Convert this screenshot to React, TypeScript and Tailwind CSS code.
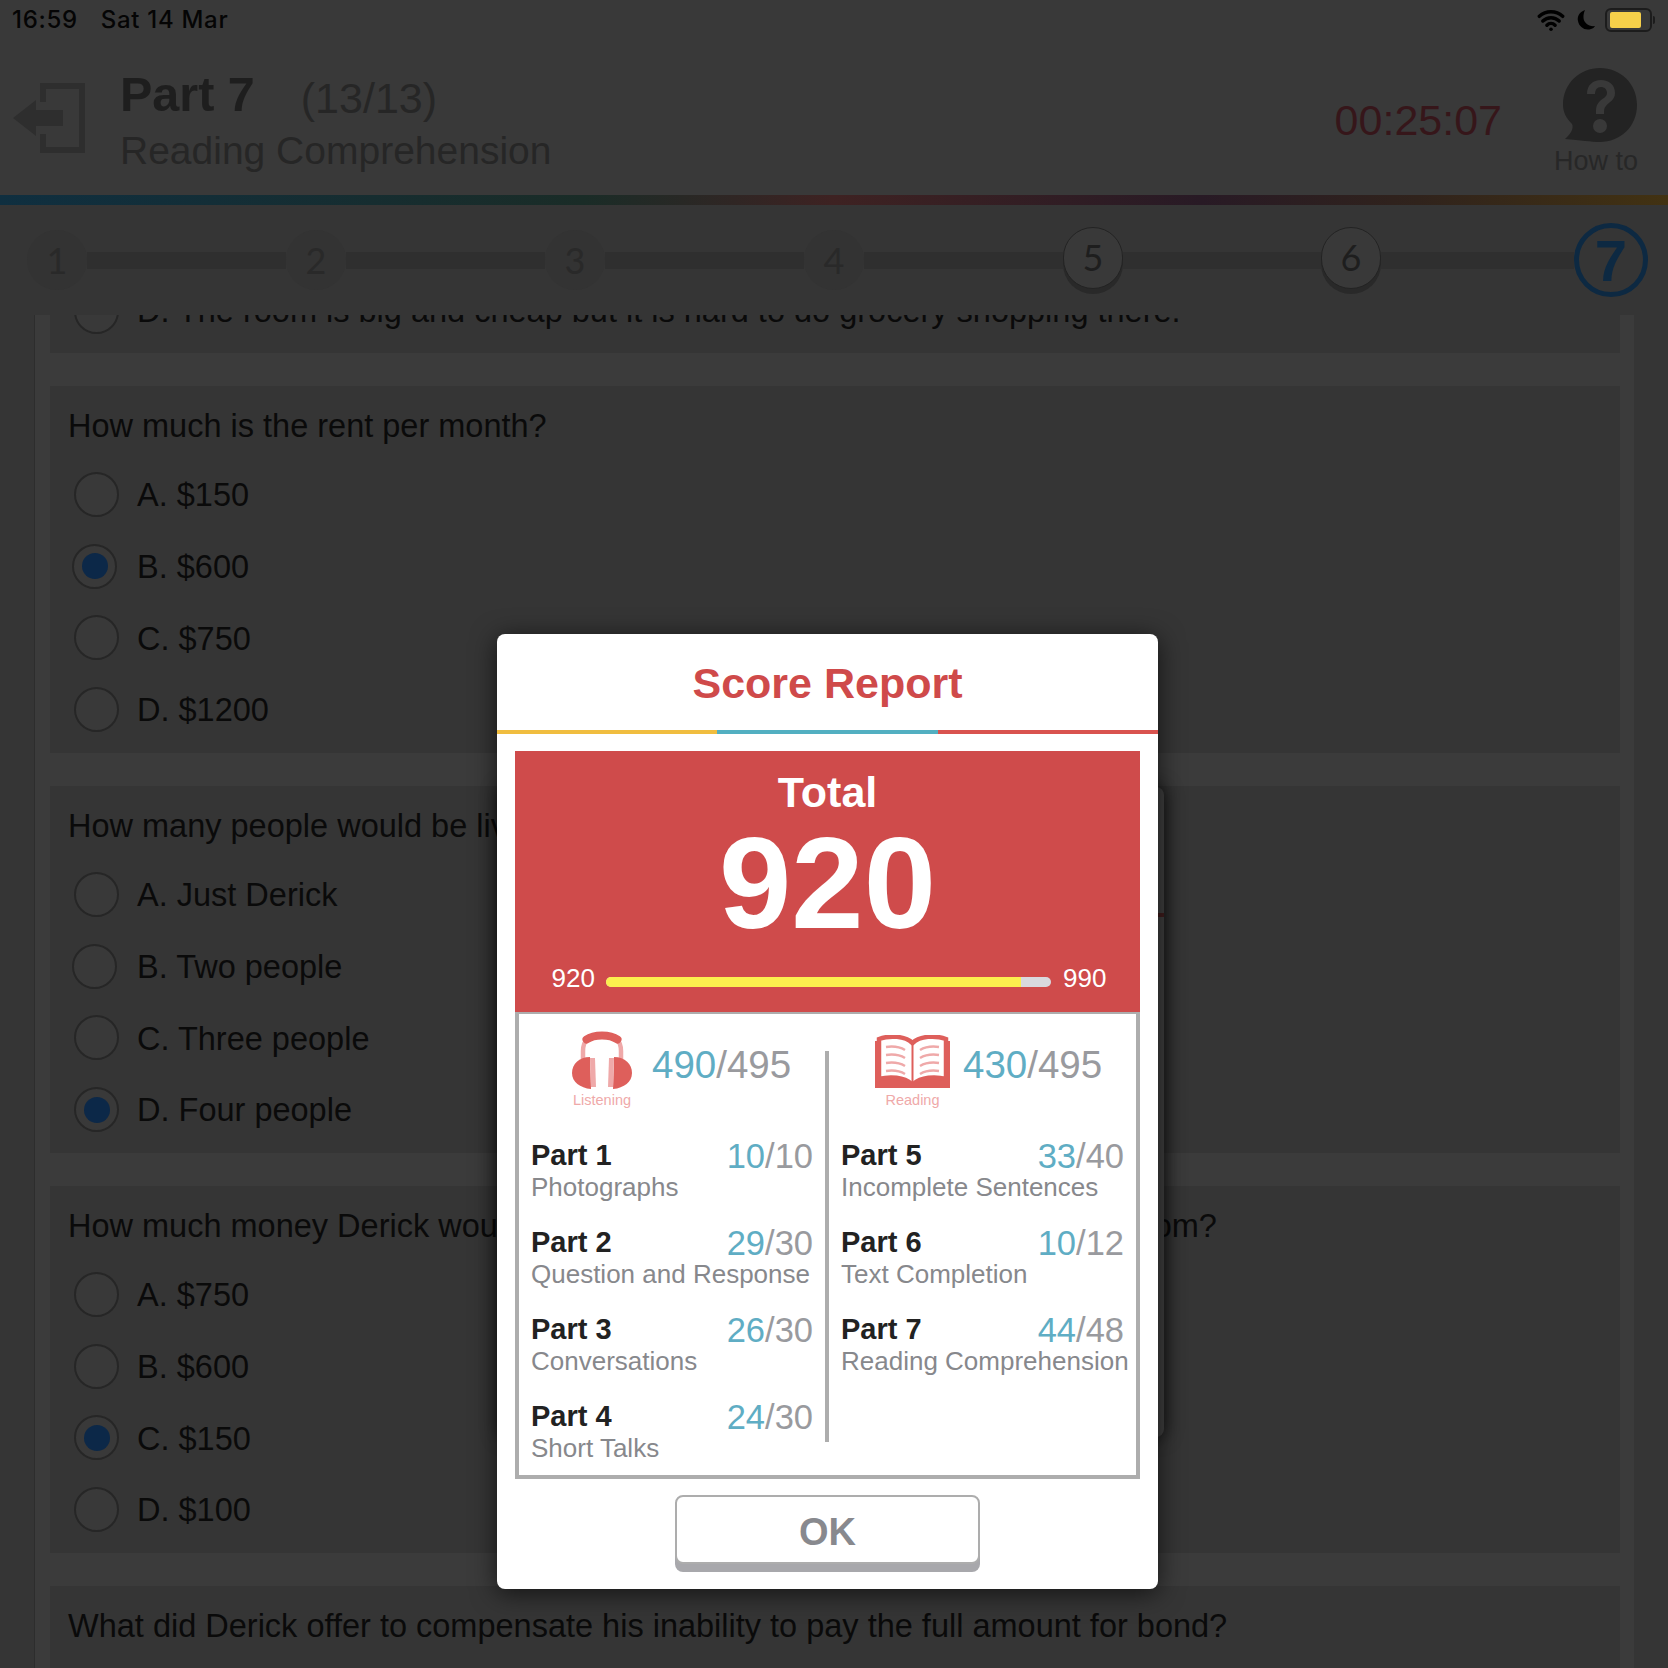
import { Wifi } from "lucide-react";

type Option = { label: string; selected?: boolean; shift?: boolean };

const questions: { title: string; options: Option[] }[] = [
  {
    title: "How much is the rent per month?",
    options: [
      { label: "A. $150" },
      { label: "B. $600", selected: true, shift: true },
      { label: "C. $750" },
      { label: "D. $1200" },
    ],
  },
  {
    title: "How many people would be living in the room?",
    options: [
      { label: "A. Just Derick" },
      { label: "B. Two people", shift: true },
      { label: "C. Three people" },
      { label: "D. Four people", selected: true },
    ],
  },
  {
    title: "How much money Derick would need to pay in advance in order to rent a room?",
    options: [
      { label: "A. $750" },
      { label: "B. $600" },
      { label: "C. $150", selected: true },
      { label: "D. $100" },
    ],
  },
];

const listening = [
  { part: "Part 1", name: "Photographs", score: "10", max: "10" },
  { part: "Part 2", name: "Question and Response", score: "29", max: "30" },
  { part: "Part 3", name: "Conversations", score: "26", max: "30" },
  { part: "Part 4", name: "Short Talks", score: "24", max: "30" },
];

const reading = [
  { part: "Part 5", name: "Incomplete Sentences", score: "33", max: "40" },
  { part: "Part 6", name: "Text Completion", score: "10", max: "12" },
  { part: "Part 7", name: "Reading Comprehension", score: "44", max: "48" },
];

function Radio({ selected, shift }: { selected?: boolean; shift?: boolean }) {
  return (
    <span
      className={`flex h-[45px] w-[45px] shrink-0 items-center justify-center rounded-full border-2 border-[#262626] bg-[#393939] ${
        shift ? "mr-[20px] ml-[-2px]" : "mr-[18px]"
      }`}
    >
      {selected && <span className="h-[26px] w-[26px] rounded-full bg-[#0c2848]" />}
    </span>
  );
}

function Question({ title, options }: { title: string; options: Option[] }) {
  return (
    <div className="h-[367px] bg-[#353535] pl-[18px]">
      <p className="pt-[21px] text-[32.5px] leading-[38px] whitespace-nowrap text-[#0a0a0a]">{title}</p>
      <div className="mt-[14px] flex flex-col pl-[6px]">
        {options.map((o) => (
          <div key={o.label} className="flex h-[71.6px] items-center text-[32.5px] text-[#0a0a0a]">
            <Radio selected={o.selected} shift={o.shift} />
            <span className="mt-[2px]">{o.label}</span>
          </div>
        ))}
      </div>
    </div>
  );
}

function Step({ n, done }: { n: number; done?: boolean }) {
  if (done) {
    return (
      <div className="mb-[4px] flex h-[62px] w-[60px] shrink-0 items-center justify-center rounded-full border border-[#232323] bg-[#393939] pb-[2px] font-['Lato',sans-serif] text-[36px] text-[#1e1e1e] shadow-[0_5px_0_#292929]">
        {n}
      </div>
    );
  }
  return (
    <div className="flex h-[60px] w-[60px] shrink-0 items-center justify-center rounded-full bg-[#333333] font-['Lato',sans-serif] text-[36px] text-[#292929]">
      {n}
    </div>
  );
}

function Track({ width }: { width: string }) {
  return <div className={`h-[17px] bg-[#2f2f2f] ${width}`} />;
}

function Headphones() {
  return (
    <svg width="60" height="58" viewBox="0 0 60 58">
      <path d="M11 28 V20 C11 14 13 10 16 7 M49 28 V20 C49 14 47 10 44 7" fill="none" stroke="#efa9a9" strokeWidth="4.5" />
      <path d="M14.500 8.500 C22 3 38 3 45.500 8.500" fill="none" stroke="#de5f5b" strokeWidth="8" strokeLinecap="round" />
      <path d="M18 26 C7 26 0 33 0 42 C0 51 8 57 19 58 Z" fill="#de5f5b" />
      <path d="M42 26 C53 26 60 33 60 42 C60 51 52 57 41 58 Z" fill="#de5f5b" />
      <path d="M20.500 27 L21.500 56" stroke="#efa9a9" strokeWidth="5" />
      <path d="M39.500 27 L38.500 56" stroke="#efa9a9" strokeWidth="5" />
    </svg>
  );
}

function Book() {
  return (
    <svg width="75" height="54" viewBox="0 0 75 54" className="mt-[4px]">
      <path d="M0 6 H5 V44 H70 V6 H75 V53 H0 Z" fill="#de5f5b" />
      <path d="M4 4 C15 0 30 1 37.500 8 C45 1 60 0 71 4 V44 C60 41 46 42 38.500 49 H36.500 C29 42 15 41 4 44 Z" fill="#fff" stroke="#de5f5b" strokeWidth="4.500" />
      <path d="M37.500 8 V49" stroke="#de5f5b" strokeWidth="2" />
      <path d="M11 12 C18 11 25 12 30 15 M11 20 C18 19 25 20 30 23 M11 28 C18 27 25 28 30 31 M11 36 C18 35 25 36 30 39" fill="none" stroke="#efa9a9" strokeWidth="2.500" />
      <path d="M64 12 C57 11 50 12 45 15 M64 20 C57 19 50 20 45 23 M64 28 C57 27 50 28 45 31 M64 36 C57 35 50 36 45 39" fill="none" stroke="#efa9a9" strokeWidth="2.500" />
    </svg>
  );
}

function PartRow({ part, name, score, max }: { part: string; name: string; score: string; max: string }) {
  return (
    <div className="mb-[23px] whitespace-nowrap">
      <div className="flex justify-between">
        <span className="text-[29px] leading-[34px] font-bold text-[#222]">{part}</span>
        <span className="mt-[2px] text-[34.5px] leading-[32px] text-[#999a9e]">
          <span className="text-[#5fadc4]">{score}</span>/{max}
        </span>
      </div>
      <div className="text-[26px] leading-[30px] text-[#87888c]">{name}</div>
    </div>
  );
}

function SectionHead({ label, score, icon, left, gap }: { label: string; score: string; icon: React.ReactNode; left: string; gap: string }) {
  return (
    <div className={`flex h-[124px] items-start pt-[17px] ${left} ${gap}`}>
      <div className="flex flex-col items-center">
        {icon}
        <span className="mt-[1px] text-[14.5px] leading-[20px] text-[#efa9a9]">{label}</span>
      </div>
      <span className="mt-[14px] text-[38.5px] leading-[40px] text-[#999a9e]">
        <span className="text-[#5fadc4]">{score}</span>/495
      </span>
    </div>
  );
}

export default function App() {
  return (
    <div className="relative h-[1668px] w-[1668px] overflow-hidden bg-[#353535] font-['Liberation_Sans',Arial,sans-serif]">
      {/* Header */}
      <div className="h-[195px] bg-[#393939]">
        <div className="flex h-[40px] items-center justify-between pr-[13px] pl-[12px] text-[24px] text-[#050505]">
          <div className="flex gap-[23px] font-['Inter',sans-serif] font-medium tracking-[0.7px]">
            <span>16:59</span>
            <span>Sat 14 Mar</span>
          </div>
          <div className="flex items-center">
            <Wifi size={28} strokeWidth={3} className="mr-[2px] text-black" />
            <svg width="20" height="22" viewBox="0 0 20 22" className="mr-[9px] ml-[9px]">
              <path d="M9 1 C3 3 1 8 2 12 C3 18 9 22 15 20 C17 19.500 18 18.500 19 17 C13 18 8 14 7.500 9 C7.300 6 8 3 9 1 Z" fill="#000" />
            </svg>
            <div className="flex h-[24px] w-[47px] items-center rounded-[6px] border-2 border-[#1c1c1c] pl-[3px]">
              <div className="h-[16px] w-[31px] rounded-[2px] bg-[#f6d04a]" />
            </div>
            <div className="ml-[1px] h-[8px] w-[2px] rounded-r bg-[#1c1c1c]" />
          </div>
        </div>

        <div className="flex">
          <svg width="80" height="76" viewBox="0 0 80 76" className="mt-[40px] ml-[12px]">
            <path d="M31 22 V6 H70 V70 H31 V54" fill="none" stroke="#2e2e2e" strokeWidth="6" />
            <path d="M1 38 L24 20 V30 H51 V46 H24 V56 Z" fill="#2e2e2e" />
          </svg>
          <div className="ml-[28px]">
            <div className="mt-[26px] flex items-baseline">
              <span className="text-[48.5px] leading-[56px] font-bold text-[#1e1e1e]">Part 7</span>
              <span className="ml-[46px] translate-y-[2px] text-[43px] leading-[56px] text-[#262626]">(13/13)</span>
            </div>
            <div className="mt-[5px] text-[39px] leading-[44px] text-[#262626]">Reading Comprehension</div>
          </div>
          <div className="ml-auto flex">
            <span className="mt-[15px] mr-[52px] text-[43px] leading-[130px] text-[#36161a]">00:25:07</span>
            <div className="mr-[30px] flex w-[84px] flex-col items-center pt-[28px]">
              <svg width="74" height="74" viewBox="0 0 74 74" className="ml-[7px]">
                <path d="M37 0 C57 0 74 15 74 37 C74 59 57 74 37 74 C28 74 18 72 2 71 C8 66 11 60 9 56 C3 50 0 44 0 37 C0 15 17 0 37 0 Z" fill="#232323" />
                <path d="M24 26 C24 17 30 12 38 12 C46 12 52 17 52 25 C52 32 46 34 43 38 C41 40 41 42 41 46 H33 C33 40 33 37 37 33 C40 30 44 29 44 25 C44 21 41 19 38 19 C34 19 32 22 32 26 Z" fill="#393939" />
                <circle cx="37" cy="58" r="7" fill="#393939" />
              </svg>
              <span className="mt-[1px] text-[27px] leading-[36px] whitespace-nowrap text-[#272727]">How to</span>
            </div>
          </div>
        </div>
      </div>

      {/* Colour bar */}
      <div className="h-[10px] bg-[linear-gradient(to_right,#0f2f40_0%,#1a2c27_35%,#3e2222_50%,#281a25_72%,#30231c_85%,#423212_100%)]" />

      {/* Stepper */}
      <div className="flex h-[110px] items-center pl-[27px]">
        <Step n={1} />
        <Track width="w-[199px]" />
        <Step n={2} />
        <Track width="w-[199px]" />
        <Step n={3} />
        <Track width="w-[199px]" />
        <Step n={4} />
        <Track width="w-[199px]" />
        <Step n={5} done />
        <Track width="w-[198px]" />
        <Step n={6} done />
        <Track width="w-[193px]" />
        <div className="flex h-[74px] w-[74px] shrink-0 items-center justify-center rounded-full border-[5px] border-[#0d2942] text-[58px] font-bold text-[#0d2942]">
          7
        </div>
      </div>

      {/* Question list */}
      <div className="ml-[34px] h-[1353px] w-[1600px] overflow-hidden border-l border-[#2d2d2d] bg-[#3b3b3b] pr-[14px] pl-[15px]">
        <div className="flex flex-col gap-[33px]">
          <div className="flex h-[38px] items-start overflow-hidden bg-[#353535] pl-[24px]">
            <div className="mt-[-30px] flex h-[52px] items-center text-[32.5px] whitespace-nowrap text-[#0a0a0a]">
              <Radio />
              D. The room is big and cheap but it is hard to do grocery shopping there.
            </div>
          </div>
          {questions.map((q) => (
            <Question key={q.title} title={q.title} options={q.options} />
          ))}
          <div className="h-[200px] bg-[#353535] pl-[18px]">
            <p className="pt-[21px] text-[32.5px] leading-[38px] whitespace-nowrap text-[#0a0a0a]">
              What did Derick offer to compensate his inability to pay the full amount for bond?
            </p>
          </div>
        </div>
      </div>

      {/* Dialog sitting behind the score report */}
      <div className="absolute top-[787px] left-[500px] h-[650px] w-[664px] rounded-[8px] bg-[#3f3f3f] pt-[126px] shadow-[0_0_18px_rgba(0,0,0,0.75)]">
        <div className="h-[4px] bg-[#3f1c1c]" />
      </div>

      {/* Score report */}
      <div className="absolute top-[634px] left-[497px] flex w-[661px] flex-col rounded-[8px] bg-white px-[18px] pb-[17px] shadow-[0_4px_26px_rgba(0,0,0,0.65)]">
        <div className="mx-[-18px] flex h-[96px] items-center justify-center pt-[2px] text-[43px] font-bold text-[#cf4a4a]">Score Report</div>
        <div className="mx-[-18px] flex h-[4px]">
          <div className="flex-1 bg-[#f0bd3f]" />
          <div className="flex-1 bg-[#52afc1]" />
          <div className="flex-1 bg-[#d9534f]" />
        </div>

        <div className="mt-[17px] flex h-[261px] flex-col items-center bg-[#cf4b4b] pt-[17px] text-white">
          <div className="text-[43px] leading-[48px] font-bold">Total</div>
          <div className="mt-[2px] text-[130px] leading-[130px] font-bold">920</div>
          <div className="mt-[15px] flex items-center pl-[3px] text-[26px] leading-[30px]">
            <span>920</span>
            <div className="mt-[8px] mr-[12px] ml-[11px] h-[10px] w-[445px] overflow-hidden rounded-full bg-[#d9d9de]">
              <div className="h-full w-[93.3%] bg-[#fcef4e]" />
            </div>
            <span>990</span>
          </div>
        </div>

        <div className="flex h-[467px] border-x-4 border-t-2 border-b-4 border-[#adadad]">
          <div className="w-[306px] shrink-0 px-[12px]">
            <SectionHead label="Listening" score="490" icon={<Headphones />} left="pl-[41px]" gap="gap-[20px]" />
            {listening.map((r) => (
              <PartRow key={r.part} {...r} />
            ))}
          </div>
          <div className="mt-[37px] h-[391px] w-[4px] shrink-0 bg-[#adadad]" />
          <div className="w-[307px] min-w-0 shrink-0 pr-[12px] pl-[12px]">
            <SectionHead label="Reading" score="430" icon={<Book />} left="pl-[34px]" gap="gap-[13px]" />
            {reading.map((r) => (
              <PartRow key={r.part} {...r} />
            ))}
          </div>
        </div>

        <button className="mx-auto mt-[16px] mb-[8px] flex h-[69px] w-[305px] items-center justify-center rounded-[8px] border-2 border-[#adadad] bg-white pt-[6px] text-[38px] font-bold text-[#88898e] shadow-[0_8px_0_#a8a8ac]">
          OK
        </button>
      </div>
    </div>
  );
}
